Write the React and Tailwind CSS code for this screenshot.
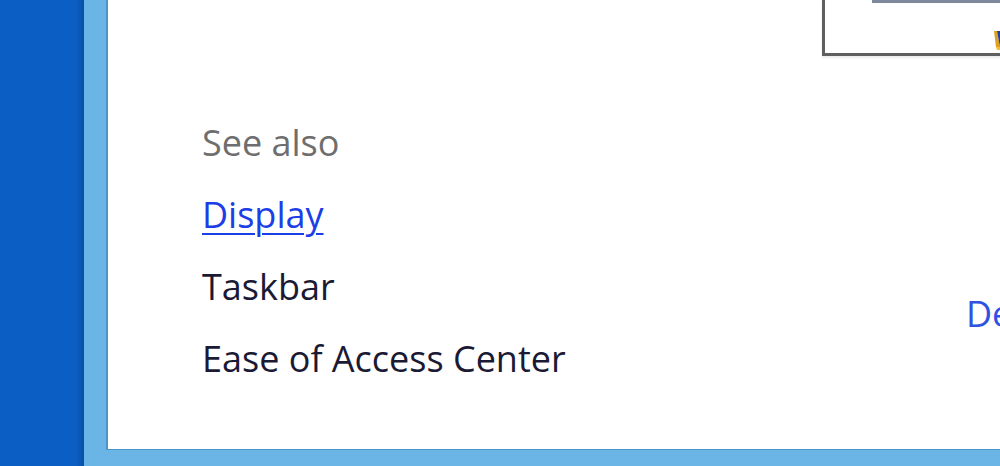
export default function App() {
  return (
    <main className="flex h-[466px] w-[1000px] overflow-hidden bg-[#6ab4e6] font-['Open_Sans',sans-serif]">
      {/* Desktop edge */}
      <div className="flex h-full w-[84px] shrink-0 bg-[#0a5ec4]">
        <div className="ml-auto h-full w-[8px] bg-gradient-to-r from-[#0a5ec4] to-[#0a4fa6]" />
      </div>

      {/* Window frame */}
      <div className="flex min-w-0 flex-1 flex-col pl-[22px]">
        <div className="flex h-[450px] min-w-0 flex-col overflow-hidden border-b border-l-2 border-[#4f94c6] bg-white">
          {/* Preview box, cut at the right */}
          <div className="flex h-[57px] shrink-0">
            <div className="ml-[714px] flex h-[56px] w-[300px] shrink-0 flex-col border-b-[3px] border-l-[3px] border-[#5f5f5f] shadow-[0_2px_2px_rgba(0,0,0,0.08)]">
              <div className="ml-[47px] h-[3px] bg-[#7d889b]" />
              <div className="flex flex-1 items-end pb-[2px] pl-[168px]">
                <svg width="10" height="22" viewBox="0 0 10 22">
                  <path d="M1 2 L4 2 L7 18 L3 18 Z" fill="#e0a020" />
                  <path d="M4 2 L9 2 L9 18 L7 18 Z" fill="#2040a0" />
                  <path d="M3 18 L9 18 L9 21 L4 21 Z" fill="#f0c030" />
                </svg>
              </div>
            </div>
          </div>

          {/* See also */}
          <div className="flex min-w-0 flex-1 pl-[94px]">
            <div className="flex flex-col text-[36px] leading-[72px]">
              <span className="mt-[50px] text-[#6e6e6e]">See also</span>
              <span className="text-[#1c3ee6] underline decoration-2 underline-offset-[5px]">Display</span>
              <span className="text-[#1b1a35]">Taskbar</span>
              <span className="text-[#1b1a35]">Ease of Access Center</span>
            </div>
            <div className="ml-auto w-[34px] shrink-0 overflow-hidden whitespace-nowrap pt-[221px] text-[36px] leading-[72px] text-[#2f52e0]">
              De
            </div>
          </div>
        </div>
      </div>
    </main>
  )
}
